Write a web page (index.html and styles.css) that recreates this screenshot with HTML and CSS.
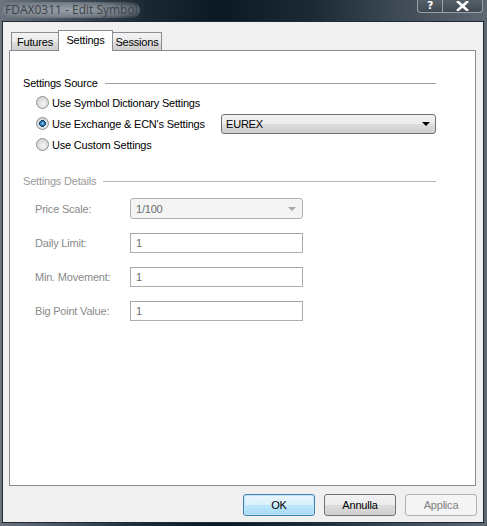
FILE: index.html
```html
<!DOCTYPE html>
<html>
<head>
<meta charset="utf-8">
<link rel="stylesheet" href="styles.css">
</head>
<body>
<div class="window">
  <div class="titlebar">
    <span class="title">FDAX0311 - Edit Symbol</span>
    <div class="caption-btns">
      <div class="cap help">?</div>
      <div class="cap close">
        <svg width="13" height="10" viewBox="0 0 13 10"><path d="M2 1 L11 9 M11 1 L2 9" stroke="#fff" stroke-width="2.6" stroke-linecap="square"/></svg>
      </div>
    </div>
  </div>
  <div class="client">
    <div class="tabs">
      <div class="tab t-futures">Futures</div>
      <div class="tab t-settings selected">Settings</div>
      <div class="tab t-sessions">Sessions</div>
    </div>
    <div class="panel">
      <div class="group-head source"><span>Settings Source</span><div class="rule"></div></div>
      <div class="radio-row"><span class="radio"></span><span>Use Symbol Dictionary Settings</span></div>
      <div class="radio-row"><span class="radio checked"></span><span>Use Exchange &amp; ECN's Settings</span>
        <div class="combo"><span>EUREX</span><span class="arrow"></span></div>
      </div>
      <div class="radio-row"><span class="radio"></span><span>Use Custom Settings</span></div>

      <div class="group-head details"><span>Settings Details</span><div class="rule"></div></div>
      <div class="fields">
        <span class="flabel">Price Scale:</span>
        <div class="combo disabled tall"><span>1/100</span><span class="arrow"></span></div>
        <span class="flabel">Daily Limit:</span>
        <div class="input">1</div>
        <span class="flabel">Min. Movement:</span>
        <div class="input">1</div>
        <span class="flabel">Big Point Value:</span>
        <div class="input">1</div>
      </div>
    </div>
    <div class="buttons">
      <div class="btn default">OK</div>
      <div class="btn">Annulla</div>
      <div class="btn disabled">Applica</div>
    </div>
  </div>
</div>
</body>
</html>
```
FILE: styles.css
```css
html, body {
  margin: 0;
  padding: 0;
}
body {
  width: 487px;
  height: 526px;
  overflow: hidden;
  background: #2f3c49;
  font-family: "Liberation Sans", Arial, sans-serif;
  font-size: 11px;
  letter-spacing: -0.2px;
  color: #000;
}
.window {
  width: 487px;
  height: 526px;
  display: flex;
  flex-direction: column;
  background:
    linear-gradient(90deg, #6b747d 0%, #4a5560 12%, #1a2834 30%, #0b1925 45%, #1d2b38 65%, #3b4753 80%, #5c6771 100%);
}
.titlebar {
  height: 22px;
  display: flex;
  align-items: flex-start;
  padding-left: 3px;
}
.title {
  margin-top: 2px;
  padding: 0 2px;
  font-family: "Open Sans", "Noto Sans", sans-serif;
  font-size: 12px;
  line-height: 16px;
  letter-spacing: 0;
  color: #3e434a;
  background: radial-gradient(ellipse at 50% 50%, rgba(170,176,182,0.85) 0%, rgba(150,157,164,0.6) 60%, rgba(120,128,136,0) 100%);
  border-radius: 8px;
}
.caption-btns {
  margin-left: auto;
  margin-right: 4px;
  display: flex;
  height: 13px;
}
.cap {
  height: 13px;
  box-sizing: border-box;
  border: 1px solid #9aa1a8;
  border-top: none;
  background: linear-gradient(#56606a, #3f4952);
  color: #fff;
  display: flex;
  align-items: center;
  justify-content: center;
}
.help {
  width: 25px;
  border-radius: 0 0 0 4px;
  border-right: none;
  font-family: "DejaVu Sans", sans-serif;
  font-weight: bold;
  font-size: 11px;
  line-height: 11px;
  padding-bottom: 1px;
}
.close {
  width: 41px;
  border-radius: 0 0 4px 0;
}
.client {
  flex: 1;
  margin: 0 4px 4px 3px;
  background: #f0f0f0;
  display: flex;
  flex-direction: column;
  box-shadow: 0 0 0 1px #1f2a35;
}
.tabs {
  height: 28px;
  display: flex;
  align-items: flex-end;
  padding-left: 8px;
  position: relative;
  z-index: 1;
}
.tab {
  box-sizing: border-box;
  height: 18px;
  border: 1px solid #898c95;
  border-bottom: none;
  background: linear-gradient(#f3f3f3 0%, #ebebeb 50%, #dddddd 50%, #cfcfcf 100%);
  display: flex;
  align-items: center;
  justify-content: center;
  padding-top: 1px;
}
.t-futures { width: 48px; }
.t-settings { width: 55px; margin-left: -1px; }
.t-sessions { width: 50px; margin-left: -1px; }
.tab.selected {
  height: 21px;
  margin-bottom: -1px;
  background: #fff;
  padding-top: 0;
  padding-bottom: 3px;
  position: relative;
  z-index: 2;
}
.panel {
  box-sizing: border-box;
  height: 436px;
  margin: 0 7px 0 6px;
  background: #fff;
  border: 1px solid #898c95;
  padding: 0 39px 0 13px;
  display: flex;
  flex-direction: column;
}
.group-head {
  height: 14px;
  display: flex;
  align-items: center;
}
.group-head .rule {
  flex: 1;
  height: 1px;
  background: #a0a0a0;
  margin-left: 7px;
}
.source { margin-top: 25px; margin-bottom: 2px; }
.details { margin-top: 19px; margin-bottom: 10px; color: #9a9a9a; }
.details .rule { background: #b5b5b5; }
.radio-row {
  height: 21px;
  display: flex;
  align-items: center;
  padding-left: 13px;
}
.radio {
  box-sizing: border-box;
  width: 13px;
  height: 13px;
  border-radius: 50%;
  border: 1px solid #8e8f8f;
  background: radial-gradient(circle at 55% 60%, #f4f4f4 0%, #dcdcdc 55%, #c7c7c7 100%);
  margin-right: 3px;
  position: relative;
}
.radio.checked {
  background:
    radial-gradient(circle at 50% 50%, #8fd0f6 0%, #2b77b8 25%, #0d3d6b 42%, transparent 45%),
    radial-gradient(circle at 55% 60%, #f4f4f4 0%, #dcdcdc 55%, #c7c7c7 100%);
}
.combo {
  box-sizing: border-box;
  width: 215px;
  height: 20px;
  margin-left: auto;
  border: 1px solid #707070;
  border-radius: 3px;
  background: linear-gradient(#f2f2f2 0%, #ebebeb 50%, #dddddd 50%, #cfcfcf 100%);
  display: flex;
  align-items: center;
  padding: 0 4px 0 4px;
}
.combo .arrow {
  margin-left: auto;
  margin-right: 1px;
  width: 0;
  height: 0;
  border-left: 4px solid transparent;
  border-right: 4px solid transparent;
  border-top: 4px solid #000;
}
.fields {
  display: grid;
  grid-template-columns: 95px 173px;
  row-gap: 14px;
  padding-left: 12px;
  align-items: center;
}
.flabel {
  color: #8a8a8a;
}
.combo.disabled {
  width: 173px;
  height: 21px;
  margin-left: 0;
  border-color: #adb2b5;
  background: #f4f4f4;
  color: #6d6d6d;
  padding-left: 5px;
}
.combo.disabled .arrow {
  border-top-color: #a9a9a9;
  margin-right: 2px;
}
.input {
  box-sizing: border-box;
  height: 20px;
  border: 1px solid #abadb3;
  border-top-color: #a3a6ae;
  background: #fff;
  color: #6d6d6d;
  padding-left: 5px;
  line-height: 18px;
}
.buttons {
  display: flex;
  justify-content: flex-end;
  gap: 9px;
  padding: 8px 6px 0 0;
}
.btn {
  box-sizing: border-box;
  width: 72px;
  height: 22px;
  border: 1px solid #707070;
  border-radius: 3px;
  background: linear-gradient(#f2f2f2 0%, #ebebeb 50%, #dddddd 50%, #cfcfcf 100%);
  display: flex;
  align-items: center;
  justify-content: center;
}
.btn.default {
  border-color: #3c7fb1;
  background: linear-gradient(#eaf6fd 0%, #d9f0fc 50%, #bee6fd 50%, #a7d9f5 100%);
  box-shadow: inset 0 0 0 1px #c6e6f8;
}
.btn.disabled {
  border-color: #adb2b5;
  background: #f4f4f4;
  color: #838383;
}
```
